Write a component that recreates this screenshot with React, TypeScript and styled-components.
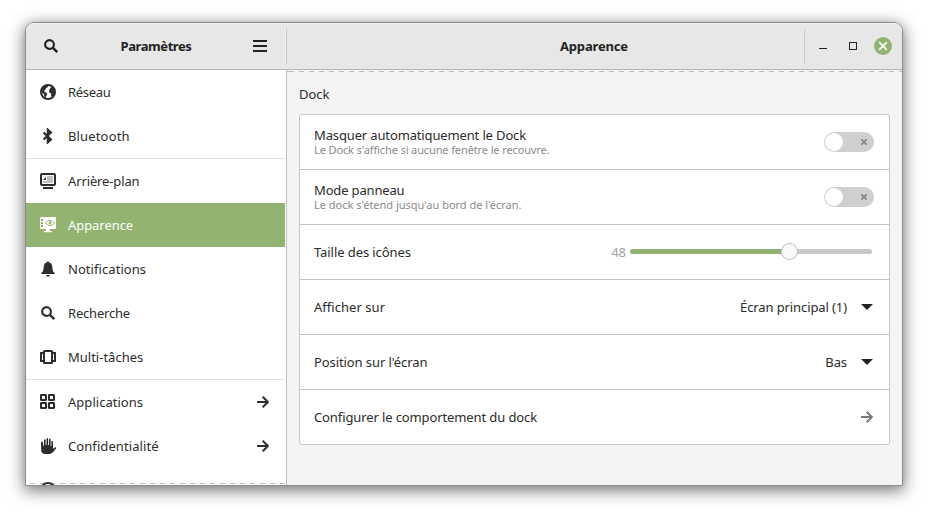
import React from "react";
import styled, { createGlobalStyle, css } from "styled-components";

const GlobalStyle = createGlobalStyle`
  * { box-sizing: border-box; }
  body { margin: 0; background: #fff; font: 13px/18px "Noto Sans", sans-serif; color: #2d2d2d; }
`;

const accent = "#92b372";
const line = "#c6c6c6";

const Desktop = styled.main`
  width: 928px;
  height: 514px;
  padding: 22px 25px 28px;
  overflow: hidden;
`;

const Window = styled.section`
  width: 878px;
  height: 464px;
  display: grid;
  grid-template: 47px 415px / 261px 615px;
  border: 1px solid #8e8e8e;
  border-radius: 9px 9px 0 0;
  overflow: hidden;
  background: #f4f4f4;
  box-shadow: 0 4px 16px 1px rgba(0, 0, 0, 0.5), 0 0 8px rgba(0, 0, 0, 0.08);
`;

const Header = styled.header`
  display: flex;
  align-items: center;
  background: #e7e7e7;
  border-bottom: 1px solid #b7b7b7;
  box-shadow: inset 0 1px #f2f2f2;
`;

const SideHeader = styled(Header)`
  padding: 0 17px;
  justify-content: space-between;
  color: #222;
`;

const MainHeader = styled(Header)`
  display: grid;
  grid-template-columns: 1fr 98px;
`;

const HeaderRule = styled.i`
  width: 2px;
  height: 35px;
  margin-right: -17px;
  background: #c2c2c2;
  border-left: 1px solid #f3f3f3;
`;

const HeaderCluster = styled.div`
  display: flex;
  align-items: center;
  gap: 18px;
`;

const Title = styled.h1<{ $tracking: number }>`
  margin: 0;
  font: 700 13px/18px "Noto Sans", sans-serif;
  letter-spacing: ${(p) => p.$tracking}px;
  color: #222;
  white-space: nowrap;
`;

const MainTitle = styled(Title)`
  padding-left: 273px;
`;

const WindowButtons = styled.div`
  height: 35px;
  display: flex;
  align-items: center;
  padding-left: 14px;
  border-left: 1px solid #c9c9c9;
`;

const Sidebar = styled.nav`
  overflow: hidden;
  display: flex;
  flex-direction: column;
  background: #fff;
  border-right: 1px solid #c0c0c0;
  padding-right: 1px;
  position: relative;
`;

const NavItem = styled.a<{ $active?: boolean; $ruled?: boolean }>`
  flex: none;
  height: 44px;
  display: flex;
  align-items: center;
  padding: 0 16px 0 14px;
  gap: 12px;
  z-index: 1;
  ${(p) => p.$active && css`background: ${accent}; color: #fff;`}
  ${(p) => p.$ruled && css`height: 45px; border-top: 1px solid #e2e2e2;`}
  svg { flex: none; }
`;

const Label = styled.span<{ $tracking?: number }>`
  flex: 1;
  white-space: nowrap;
  letter-spacing: ${(p) => p.$tracking ?? 0}px;
`;

/* Dashes showing that a scrolled pane continues past its edge. */
const Undershoot = styled.i<{ $edge: "top" | "bottom" }>`
  position: absolute;
  left: 0;
  right: ${(p) => (p.$edge === "top" ? 0 : 1)}px;
  ${(p) => p.$edge}: 1px;
  height: 1px;
  background: repeating-linear-gradient(
    90deg,
    #bdbdbd 0 5px,
    transparent 5px 10px
  );
  background-position-x: ${(p) => (p.$edge === "top" ? 2 : 4)}px;
`;

const Content = styled.section`
  position: relative;
  padding: 15px 12px 0;
  color: #2b2b2b;
`;

const GroupTitle = styled.h2`
  margin: 0 0 11px;
  font: 400 13px/18px "Noto Sans", sans-serif;
`;

const Card = styled.div`
  border: 1px solid ${line};
  border-radius: 3px;
  background: #fff;
  width: 591px;
`;

const SettingRow = styled.div`
  height: 55px;
  padding: 0 15px 0 14px;
  display: flex;
  align-items: center;
  border-bottom: 1px solid ${line};
  &:last-child { border-bottom: 0; height: 54px; }
`;

const LinkRow = styled(SettingRow)`
  padding-right: 16px;
`;

const TextStack = styled.div`
  flex: 1;
  display: flex;
  flex-direction: column;
  line-height: 16px;
  padding-bottom: 1px;
`;

const Hint = styled.small<{ $tracking: number }>`
  font-size: 11px;
  line-height: 13px;
  color: #8b8b8b;
  white-space: nowrap;
  letter-spacing: ${(p) => p.$tracking}px;
`;

const Switch = styled.span`
  width: 50px;
  height: 20px;
  border-radius: 10px;
  background: #cfcfcf;
  display: flex;
  align-items: center;
  justify-content: space-between;
  padding: 0 7px 0 1px;
`;

const Knob = styled.i`
  width: 18px;
  height: 18px;
  border-radius: 50%;
  background: #fff;
`;

const Amount = styled.span`
  color: #a2a2a2;
  margin-right: 4px;
`;

const Track = styled.span`
  width: 242px;
  height: 5px;
  margin: 0 2px 1px 0;
  border-radius: 3px;
  background: #c8c8c8;
  display: flex;
  align-items: center;
`;

const Fill = styled.i`
  width: 151px;
  height: 5px;
  border-radius: 3px 0 0 3px;
  background: ${accent};
`;

const Handle = styled.i`
  flex: none;
  width: 17px;
  height: 17px;
  border-radius: 50%;
  border: 1px solid #b9b9b9;
  background: #fafafa;
`;

const Value = styled.span<{ $tracking: number }>`
  margin-right: 14px;
  white-space: nowrap;
  letter-spacing: ${(p) => p.$tracking}px;
`;

const Icon = ({ children, size = 16 }: { children: React.ReactNode; size?: number }) => (
  <svg width={size} height={size} viewBox={`0 0 ${size} ${size}`} fill="currentColor">
    {children}
  </svg>
);

const SearchIcon = () => (
  <Icon>
    <circle cx="6.5" cy="6.5" r="4.4" fill="none" stroke="currentColor" strokeWidth="2.1" />
    <path d="M9.6 9.6 14.3 14.2" fill="none" stroke="currentColor" strokeWidth="2.4" />
  </Icon>
);

const GlobeIcon = () => (
  <Icon>
    <circle cx="8" cy="8" r="7" fill="none" stroke="currentColor" strokeWidth="2" />
    <path d="M1.500 4.500 5 1.200 8.600 1.200 7.600 3.200 6 4 5.600 5.600 3.800 7.200 5.800 8.400 7.400 9.800 6.600 11.400 5.800 12.800 5.400 14.200 4.300 12 4 10 1.600 8.400zM10.400 3.800 12.400 2.800 15 6.200 14.600 9.800 12.400 13 11 12 11.200 9.400 9.200 8.400 9.200 6z" />
  </Icon>
);

const BluetoothIcon = () => (
  <Icon>
    <path d="m3.600 4.500 7.200 7-2.900 2.700V1.800l2.900 2.700-7.200 7" fill="none" stroke="currentColor" strokeWidth="2.300" />
  </Icon>
);

const BackgroundIcon = () => (
  <Icon>
    <rect x="1" y="1" width="14" height="11" rx="1" fill="none" stroke="currentColor" strokeWidth="2" />
    <rect x="3" y="14" width="10" height="2" />
    <path d="M7 3h6v7H3V8h4z" opacity=".3" />
    <path d="M6 4v3H3z" />
  </Icon>
);

const AppearanceIcon = () => (
  <Icon>
    <path d="M1.2 0h13.6Q16 0 16 1.2v9.6q0 1.2-1.2 1.2H10v2h2v1.2H4V14h2v-2H1.2Q0 12 0 10.8V1.2Q0 0 1.2 0z" />
    <g fill={accent}>
      <rect x="1" y="2" width="2" height="2" />
      <rect x="1" y="5" width="2" height="2" />
      <rect x="1" y="8" width="2" height="2" />
    </g>
    <path d="M5.4 6Q10 .9 14.6 6 10 11.1 5.4 6z" fill="none" stroke={accent} />
    <circle cx="10" cy="6" r="1.4" fill={accent} />
  </Icon>
);

const BellIcon = () => (
  <Icon>
    <path d="M7 1.2Q8-.7 9 1.2 12 2 12.3 5.6c.2 4.1.7 5.3 2.4 6.4v1H1.3v-1c1.7-1.1 2.2-2.3 2.4-6.4Q4 2 7 1.2zM6 14h4q-.6 1.8-2 1.8T6 14z" />
  </Icon>
);

const MultitaskIcon = () => (
  <Icon>
    <g fill="none" stroke="currentColor">
      <rect x="4" y="2" width="8" height="12" rx=".5" strokeWidth="2" />
      <path d="M4 4H1v8h3M12 4h3v8h-3" strokeWidth="2" />
    </g>
  </Icon>
);

const AppsIcon = () => (
  <Icon>
    <g fill="none" stroke="currentColor" strokeWidth="2">
      <rect x="1" y="1" width="5" height="5" rx=".3" />
      <rect x="9" y="1" width="5" height="5" rx=".3" />
      <rect x="1" y="9" width="5" height="5" rx=".3" />
      <rect x="9" y="9" width="5" height="5" rx=".3" />
    </g>
  </Icon>
);

const HandIcon = () => (
  <Icon>
    <path d="M1 4.600q.1-1 .9-1t1 1L3.400 8H4V2.200q0-1 .8-1t.8 1V7h.9V1q0-1 .8-1t.8 1v6H9V1.600q0-1 .8-1t.8 1V8h.8V4q0-1 .8-1t.8 1v7l1.300-1.300q.8-.5 1.700-.4.7.3.200.9l-3 3.900Q11.400 16 9.500 16H5.200Q1.300 16 1.200 12z" />
  </Icon>
);

const PersonCircleIcon = () => (
  <Icon>
    <circle cx="8" cy="8" r="7" fill="none" stroke="currentColor" strokeWidth="2" />
    <circle cx="8" cy="8" r="2" />
  </Icon>
);

const ArrowIcon = ({ color }: { color?: string }) => (
  <svg width="12" height="12" viewBox="0 0 12 12" fill="none" stroke={color ?? "currentColor"} strokeWidth="2">
    <path d="M0 6h10.500M5.700.8 10.900 6l-5.200 5.200" />
  </svg>
);

const MenuIcon = () => (
  <svg width="14" height="12" viewBox="0 0 14 12" fill="currentColor">
    <path d="M0 0h14v2H0zM0 5h14v2H0zM0 10h14v2H0z" />
  </svg>
);

const MinimizeIcon = () => (
  <svg width="30" height="20" viewBox="0 0 30 20"><path d="M0 12h8v1H0z" fill="#222" /></svg>
);

const MaximizeIcon = () => (
  <svg width="25" height="20" viewBox="0 0 25 20">
    <rect x=".5" y="6.500" width="7" height="7" fill="none" stroke="#222" />
  </svg>
);

const CloseIcon = () => (
  <svg width="18" height="18" viewBox="0 0 18 18">
    <circle cx="9" cy="9" r="9" fill={accent} />
    <path d="m5.200 5.200 7.600 7.600m0-7.600-7.600 7.600" stroke="#fff" strokeWidth="1.700" />
  </svg>
);

const OffIcon = () => (
  <svg width="6" height="6" viewBox="0 0 6 6" stroke="#858585" strokeWidth="1.700">
    <path d="m.3.3 5.400 5.400m0-5.400L.3 5.700" />
  </svg>
);

const CaretIcon = () => (
  <svg width="12" height="6" viewBox="0 0 12 6"><path d="M0 0h12L6 6z" fill="#222" /></svg>
);

type Entry = {
  label: string;
  icon: React.ReactNode;
  tracking?: number;
  active?: boolean;
  ruled?: boolean;
  submenu?: boolean;
};

const entries: Entry[] = [
  { label: "Réseau", icon: <GlobeIcon />, tracking: -0.3 },
  { label: "Bluetooth", icon: <BluetoothIcon />, tracking: 0.15 },
  { label: "Arrière-plan", icon: <BackgroundIcon />, tracking: -0.13, ruled: true },
  { label: "Apparence", icon: <AppearanceIcon />, tracking: -0.06, active: true },
  { label: "Notifications", icon: <BellIcon />, tracking: 0.06 },
  { label: "Recherche", icon: <SearchIcon />, tracking: -0.2 },
  { label: "Multi-tâches", icon: <MultitaskIcon /> },
  { label: "Applications", icon: <AppsIcon />, tracking: 0.03, ruled: true, submenu: true },
  { label: "Confidentialité", icon: <HandIcon />, tracking: 0.08, submenu: true },
  { label: "", icon: <PersonCircleIcon /> },
];

const toggles = [
  { label: "Masquer automatiquement le Dock", tracking: -0.14, hint: "Le Dock s'affiche si aucune fenêtre le recouvre.", hintTracking: -0.115 },
  { label: "Mode panneau", tracking: -0.16, hint: "Le dock s'étend jusqu'au bord de l'écran.", hintTracking: -0.014 },
];

const choices = [
  { label: "Afficher sur", tracking: 0.04, value: "Écran principal (1)", valueTracking: -0.1 },
  { label: "Position sur l'écran", tracking: -0.087, value: "Bas", valueTracking: -0.1 },
];

export default function App() {
  return (
    <Desktop>
      <GlobalStyle />
      <Window>
        <SideHeader>
          <SearchIcon />
          <Title $tracking={-0.43}>Paramètres</Title>
          <HeaderCluster>
            <MenuIcon />
            <HeaderRule />
          </HeaderCluster>
        </SideHeader>
        <MainHeader>
          <MainTitle $tracking={-0.17}>Apparence</MainTitle>
          <WindowButtons>
            <MinimizeIcon />
            <MaximizeIcon />
            <CloseIcon />
          </WindowButtons>
        </MainHeader>
        <Sidebar>
          <Undershoot $edge="bottom" />
          {entries.map((e) => (
            <NavItem key={e.label} $active={e.active} $ruled={e.ruled}>
              {e.icon}
              <Label $tracking={e.tracking}>{e.label}</Label>
              {e.submenu && <ArrowIcon />}
            </NavItem>
          ))}
        </Sidebar>
        <Content>
          <Undershoot $edge="top" />
          <GroupTitle>Dock</GroupTitle>
          <Card>
            {toggles.map((t) => (
              <SettingRow key={t.label}>
                <TextStack>
                  <Label $tracking={t.tracking}>{t.label}</Label>
                  <Hint $tracking={t.hintTracking}>{t.hint}</Hint>
                </TextStack>
                <Switch role="switch" aria-checked={false}>
                  <Knob />
                  <OffIcon />
                </Switch>
              </SettingRow>
            ))}
            <SettingRow>
              <Label $tracking={-0.078}>Taille des icônes</Label>
              <Amount>48</Amount>
              <Track>
                <Fill />
                <Handle />
              </Track>
            </SettingRow>
            {choices.map((c) => (
              <LinkRow key={c.label}>
                <Label $tracking={c.tracking}>{c.label}</Label>
                <Value $tracking={c.valueTracking}>{c.value}</Value>
                <CaretIcon />
              </LinkRow>
            ))}
            <LinkRow>
              <Label $tracking={-0.11}>Configurer le comportement du dock</Label>
              <ArrowIcon color="#7b7b7b" />
            </LinkRow>
          </Card>
        </Content>
      </Window>
    </Desktop>
  );
}
